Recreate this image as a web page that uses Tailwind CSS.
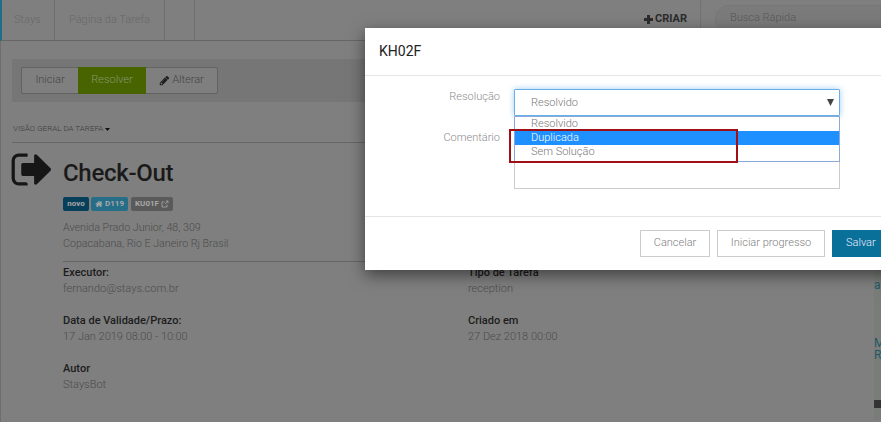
<!DOCTYPE html>
<html lang="pt">
<head>
<meta charset="utf-8">
<title>KH02F</title>
<script src="https://cdn.jsdelivr.net/npm/@tailwindcss/browser@4"></script>
</head>
<body class="relative h-[422px] w-[881px] overflow-hidden bg-[#7f7f7f] font-['Roboto',sans-serif] text-[11px] font-light text-[#4c4c4c]">
  <!-- page -->
  <div class="h-[422px] w-[881px] border-l border-l-[#6e6e6e]">
    <header class="flex h-[41px] border-b border-[#666] border-l-2 border-l-[#1f6f8b] -ml-px">
      <div class="flex h-full w-[53px] items-center border-r border-[#6e6e6e] pl-[12px] text-[#686868]">Stays</div>
      <div class="flex h-full w-[110px] items-center justify-center border-r border-[#6e6e6e] text-[#686868]">Página da Tarefa</div>
      <div class="h-full w-[30px] border-r border-[#6e6e6e]"></div>
      <div class="ml-auto flex h-[38px] items-center">
        <svg class="mr-[2px]" width="9" height="9" viewBox="0 0 9 9"><path d="M3 0h3v3h3v3H6v3H3V6H0V3h3z" fill="#2c2c2c"/></svg>
        <span class="text-[11px] font-bold text-[#2c2c2c]">CRIAR</span>
      </div>
      <div class="ml-[13px] h-[28px] border-l border-[#727272] pl-[14px] pt-[5px]">
        <div class="h-[28px] w-[166px] rounded-l-[14px] border border-[#777] bg-[#7b7b7b] pl-[14px] leading-[24px] text-[#585858]">Busca Rápida</div>
      </div>
    </header>
    <main class="relative pl-[11px]">
      <div class="mt-[18px] flex h-[43px] w-[870px] items-center bg-[#767676] pl-[9px]">
        <div class="flex h-[27px] items-stretch rounded-[2px] border border-[#626262] bg-[#7f7f7f] text-[#444]">
          <span class="flex w-[56px] items-center justify-center">Iniciar</span>
          <span class="flex w-[68px] items-center justify-center bg-[#486400] -my-px text-[#86966c]">Resolver</span>
          <span class="flex w-[71px] items-center justify-center gap-[2px]">
            <svg width="11" height="11" viewBox="0 0 1792 1792"><path fill="#1c1c1c" d="M491 1536l91-91-235-235-91 91v107h128v128h107zm523-928q0-22-22-22-10 0-17 7l-542 542q-7 7-7 17 0 22 22 22 10 0 17-7l542-542q7-7 7-17zm-54-192l416 416-832 832h-416v-416zm683 96q0 53-37 90l-166 166-416-416 166-165q36-38 90-38 53 0 91 38l235 234q37 39 37 91z"/></svg>
            Alterar
          </span>
        </div>
      </div>
      <div class="mt-[21px] flex h-[12px] items-center gap-[2px] pl-[1px] text-[8px] font-light text-[#3c3c3c]">
        VISÃO GERAL DA TAREFA
        <svg width="5" height="3" viewBox="0 0 5 3"><path d="M0 0h5L2.5 3z" fill="#111"/></svg>
      </div>
      <div class="mt-[7px] border-t border-[#666]"></div>
      <div class="flex">
        <svg class="-ml-[2px] mt-[4px] shrink-0" width="45" height="45" viewBox="0 0 1792 1792"><path fill="#161616" d="M704 1440q0 4 1 20t.5 26.5-3 23.5-10 19.5-20.5 6.5h-320q-119 0-203.5-84.5t-84.5-203.5v-704q0-119 84.5-203.5t203.5-84.5h320q13 0 22.5 9.5t9.5 22.5q0 4 1 20t.5 26.5-3 23.5-10 19.5-20.5 6.5h-320q-66 0-113 47t-47 113v704q0 66 47 113t113 47h288l11.5 1 11.5 3 8 5.5 7 9 2 13.5zm928-544q0 26-19 45l-544 544q-19 19-45 19t-45-19-19-45v-288h-448q-26 0-45-19t-19-45v-384q0-26 19-45t45-19h448v-288q0-26 19-45t45-19 45 19l544 544q19 19 19 45z"/></svg>
        <div class="ml-[8px] w-[800px]">
          <h1 class="mt-[16px] h-[29px] text-[24px] font-medium leading-[29px] tracking-[-0.3px] text-[#1a1a1a]">Check-Out</h1>
          <div class="mt-[9px] flex gap-[2px] text-[8px] font-bold leading-[14px] text-[#a8a8a8]">
            <span class="h-[14px] w-[26px] rounded-[2px] bg-[#053f59] text-center">novo</span>
            <span class="flex h-[14px] w-[37px] items-center justify-center gap-[2px] rounded-[2px] bg-[#266d88]">
              <svg width="8" height="8" viewBox="0 0 1792 1792"><path fill="#a8a8a8" d="M1472 992v480q0 26-19 45t-45 19h-384v-384h-256v384h-384q-26 0-45-19t-19-45v-480q0-1 .5-3t.5-3l575-474 575 474q1 2 1 6zm223-69l-62 74q-8 9-21 11h-3q-13 0-21-7l-692-577-692 577q-12 8-24 7-13-2-21-11l-62-74q-8-10-7-23.5t11-21.5l719-599q32-26 76-26t76 26l244 204v-195q0-14 9-23t23-9h192q14 0 23 9t9 23v408l219 182q10 8 11 21.5t-7 23.5z"/></svg>
              D119
            </span>
            <span class="ml-[1px] flex h-[14px] w-[42px] items-center justify-center gap-[2px] rounded-[2px] bg-[#5a5a5a]">
              KU01F
              <svg width="8" height="8" viewBox="0 0 8 8" fill="none" stroke="#a8a8a8" stroke-width="0.8"><path d="M6 4.5V7H1V2h2.5M4 4l3-3M5 1h2v2"/></svg>
            </span>
          </div>
          <p class="mt-[9px] text-[10.7px] leading-[16px]">Avenida Prado Junior, 48, 309<br>Copacabana, Rio E Janeiro Rj Brasil</p>
          <div class="mt-[9px] border-t border-[#666]"></div>
          <div class="mt-[3px] grid grid-cols-[405px_1fr] gap-y-[16px] leading-[16px]">
            <div><div class="font-medium text-[#1c1c1c]">Executor:</div><div>fernando@stays.com.br</div></div>
            <div><div class="font-medium text-[#1c1c1c]">Tipo de Tarefa</div><div>reception</div></div>
            <div><div class="font-medium text-[#1c1c1c]">Data de Validade/Prazo:</div><div>17 Jan 2019 08:00 - 10:00</div></div>
            <div><div class="font-medium text-[#1c1c1c]">Criado em</div><div>27 Dez 2018 00:00</div></div>
            <div><div class="font-medium text-[#1c1c1c]">Autor</div><div>StaysBot</div></div>
          </div>
        </div>
      </div>
    </main>
  </div>

  <!-- map fragment behind the dialog -->
  <div class="absolute left-[874px] top-[270px] h-[150px] w-[7px] overflow-hidden bg-[#797c79] text-[12px] font-normal leading-[12px] text-[#1e5a66]">
    <div class="mt-[9px]">a</div>
    <div class="mt-[46px]">M</div>
    <div>R</div>
    <div class="mt-[39px] h-[8px] w-[7px] bg-[#333]"></div>
  </div>

  <!-- modal -->
  <div class="absolute left-[365px] top-[28px] z-20 h-[242px] w-[600px] bg-white shadow-[0_5px_15px_rgba(0,0,0,0.5)]">
    <div class="flex h-[48px] items-center border-b border-[#e5e5e5] pl-[14px] text-[14px] font-normal text-[#222]">KH02F</div>
    <div class="relative h-[140px]">
      <div class="flex pt-[13px]">
        <label class="-mt-px w-[135px] pt-[1px] text-right leading-[16px] text-[#8c8c8c]">Resolução</label>
        <div class="relative ml-[14px] flex h-[27px] w-[326px] items-center rounded-[1px] border border-[#66afe9] pl-[16px] pt-[2px] text-[#777] shadow-[0_0_6px_rgba(102,175,233,0.6)]">
          Resolvido
          <svg class="absolute right-[5px] top-[9px]" width="7" height="7" viewBox="0 0 7 7"><path d="M0 0h7L3.5 7z" fill="#444"/></svg>
        </div>
      </div>
      <div class="flex pt-[1px]">
        <label class="mt-[13px] w-[135px] text-right leading-[16px] text-[#8c8c8c]">Comentário</label>
        <div class="ml-[14px] h-[72px] w-[326px] border border-[#ccc]"></div>
      </div>

      <!-- open dropdown list -->
      <ul class="absolute left-[149px] top-[40px] w-[326px] border border-[#8aa9d6] bg-white pb-[2px] leading-[14px] text-[#777]">
        <li class="h-[14px] pl-[16px]">Resolvido</li>
        <li class="h-[14px] bg-[#1e90ff] pl-[16px] text-white">Duplicada</li>
        <li class="h-[14px] pl-[16px]">Sem Solução</li>
      </ul>
      <!-- red annotation -->
      <div class="absolute left-[144px] top-[53px] h-[34px] w-[229px] border-2 border-[#a00f14]"></div>
    </div>
    <div class="flex h-[54px] items-start gap-[7px] border-t border-[#e5e5e5] pl-[275px] pt-[13px]">
      <button class="h-[27px] w-[70px] border border-[#ccc] bg-white text-[#808080]">Cancelar</button>
      <button class="h-[27px] w-[108px] border border-[#ccc] bg-white text-[#808080]">Iniciar progresso</button>
      <button class="h-[27px] w-[65px] bg-[#09709a] pl-[14px] text-left text-[#eef]">Salvar</button>
    </div>
  </div>
</body>
</html>
